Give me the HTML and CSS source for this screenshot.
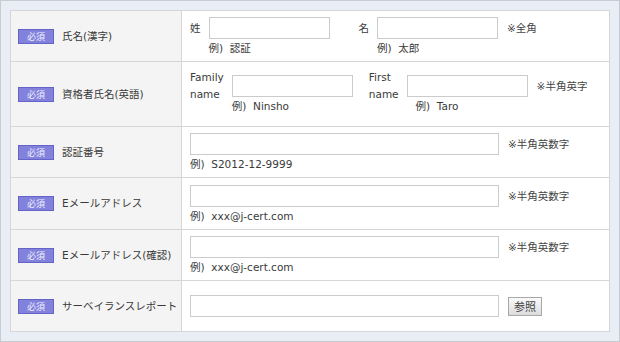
FILE: index.html
```html
<!DOCTYPE html>
<html lang="ja">
<head>
<meta charset="utf-8">
<link rel="stylesheet" href="styles.css">
</head>
<body>
<div class="frame">
  <table class="form">
    <tr class="r1">
      <th><span class="badge">必須</span><span class="label">氏名(漢字)</span></th>
      <td>
        <div class="line">
          <div class="field">
            <span class="flabel">姓</span>
            <span class="box w120"></span>
            <span class="ex">例)&nbsp;&nbsp;認証</span>
          </div>
          <div class="field gap-l29">
            <span class="flabel">名</span>
            <span class="box w120"></span>
            <span class="ex">例)&nbsp;&nbsp;太郎</span>
          </div>
          <span class="note">※全角</span>
        </div>
      </td>
    </tr>
    <tr class="r2">
      <th><span class="badge">必須</span><span class="label">資格者氏名(英語)</span></th>
      <td>
        <div class="line">
          <div class="field">
            <span class="flabel two">Family<br>name</span>
            <span class="box w120"></span>
            <span class="ex">例)&nbsp;&nbsp;Ninsho</span>
          </div>
          <div class="field gap-l16">
            <span class="flabel two">First<br>name</span>
            <span class="box w120"></span>
            <span class="ex shift">例)&nbsp;&nbsp;Taro</span>
          </div>
          <span class="note">※半角英字</span>
        </div>
      </td>
    </tr>
    <tr class="r3">
      <th><span class="badge">必須</span><span class="label">認証番号</span></th>
      <td>
        <div class="line">
          <div class="field single">
            <span class="box w308"></span>
            <span class="ex">例)&nbsp;&nbsp;S2012-12-9999</span>
          </div>
          <span class="note">※半角英数字</span>
        </div>
      </td>
    </tr>
    <tr class="r4">
      <th><span class="badge">必須</span><span class="label">Eメールアドレス</span></th>
      <td>
        <div class="line">
          <div class="field single">
            <span class="box w308"></span>
            <span class="ex">例)&nbsp;&nbsp;xxx@j-cert.com</span>
          </div>
          <span class="note">※半角英数字</span>
        </div>
      </td>
    </tr>
    <tr class="r5">
      <th><span class="badge">必須</span><span class="label">Eメールアドレス(確認)</span></th>
      <td>
        <div class="line">
          <div class="field single">
            <span class="box w308"></span>
            <span class="ex">例)&nbsp;&nbsp;xxx@j-cert.com</span>
          </div>
          <span class="note">※半角英数字</span>
        </div>
      </td>
    </tr>
    <tr class="r6">
      <th><span class="badge">必須</span><span class="label">サーベイランスレポート</span></th>
      <td>
        <div class="line center">
          <span class="box w308"></span>
          <span class="btn">参照</span>
        </div>
      </td>
    </tr>
  </table>
</div>
</body>
</html>
```

FILE: styles.css
```css
* { box-sizing: border-box; }
html, body { margin: 0; padding: 0; }
body {
  font-family: "DejaVu Sans", "Noto Sans CJK JP", sans-serif;
  font-size: 10.5px;
  color: #3a3a3a;
  background: #e9eef6;
}
.frame {
  width: 620px;
  height: 342px;
  border: 1px solid #c8ccd2;
  background: #e9eef6;
  padding: 9px;
}
.form {
  width: 600px;
  border-collapse: collapse;
  background: #fff;
  border: 1px solid #cfcfcf;
  table-layout: fixed;
}
.form th, .form td {
  border: 1px solid #d6d6d6;
  padding: 0;
  vertical-align: middle;
}
.form th {
  width: 171px;
  background: #f4f4f4;
  text-align: left;
  font-weight: normal;
  padding-left: 7px;
  white-space: nowrap;
}
.form td { padding-left: 8px; }
.r1 { height: 51px; }
.r2 { height: 65px; }
.r3 { height: 51px; }
.r4 { height: 52px; }
.r5 { height: 51px; }
.r6 { height: 51px; }

.badge {
  display: inline-block;
  vertical-align: middle;
  width: 36px;
  height: 15px;
  line-height: 13px;
  background: #8282dc;
  border: 1px solid #6464c8;
  color: #eeeeff;
  font-family: "Noto Sans CJK JP", sans-serif;
  font-size: 9px;
  text-align: center;
}
.label {
  display: inline-block;
  vertical-align: middle;
  margin-left: 8px;
  line-height: 15px;
}

.line {
  display: flex;
  align-items: flex-start;
}
.line.center { align-items: center; }
.field {
  display: grid;
  grid-template-columns: auto auto;
  column-gap: 8px;
  align-items: center;
}
.field.single { grid-template-columns: auto; }
.field .flabel {
  grid-column: 1;
  grid-row: 1;
  line-height: 14px;
}
.field .flabel.two {
  line-height: 17px;
  margin: -6px 0;
}
.field .box {
  grid-column: 2;
  grid-row: 1;
}
.field .ex {
  grid-column: 2;
  grid-row: 2;
  margin-top: 2px;
  line-height: 14px;
}
.field .ex.shift { padding-left: 9px; }
.field.single .box,
.field.single .ex { grid-column: 1; }

.box {
  display: block;
  height: 22px;
  border: 1px solid #cbcbcb;
  background: #fff;
}
.w120 { width: 121px; }
.w308 { width: 309px; }
.gap-l29 { margin-left: 29px; }
.gap-l16 { margin-left: 16px; }
.note {
  margin-left: 9px;
  line-height: 22px;
  color: #444;
}

.btn {
  display: inline-block;
  margin-left: 9px;
  width: 34px;
  height: 19px;
  line-height: 17px;
  text-align: center;
  border: 1px solid #a8a8a8;
  background: linear-gradient(#fafafa, #dcdcdc);
  color: #444;
  font-family: "Noto Sans CJK JP", sans-serif;
  font-size: 11px;
}
```
